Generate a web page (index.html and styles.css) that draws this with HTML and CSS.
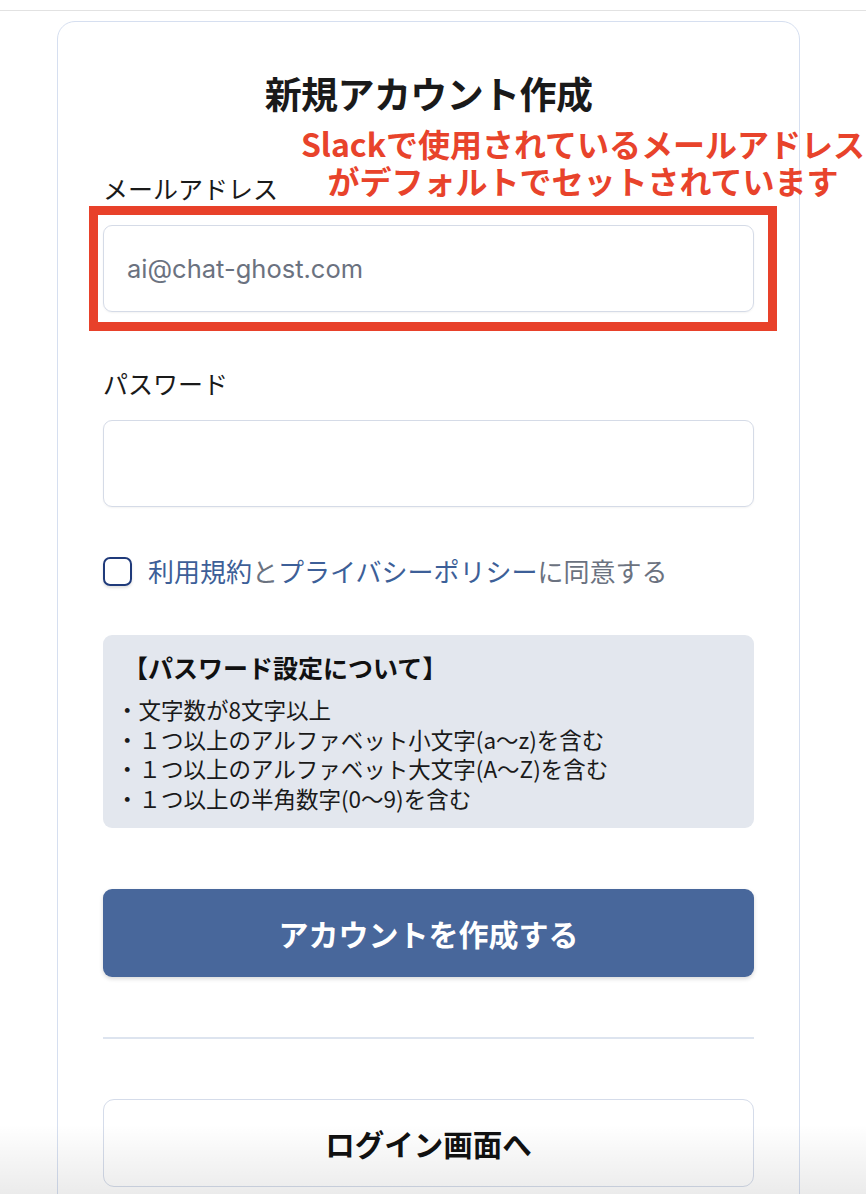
FILE: index.html
```html
<!DOCTYPE html>
<html lang="ja">
<head>
<meta charset="utf-8">
<title>新規アカウント作成</title>
<link rel="stylesheet" href="styles.css">
</head>
<body>
<div class="topbar"></div>
<div class="card">
  <h1 class="title">新規アカウント作成</h1>
  <label class="label">メールアドレス</label>
  <div class="input"><span class="placeholder">ai@chat-ghost.com</span></div>
  <label class="label label-pw">パスワード</label>
  <div class="input"></div>
  <div class="agree">
    <span class="checkbox"></span>
    <span class="agree-text"><span class="link">利用規約</span>と<span class="link">プライバシーポリシー</span>に同意する</span>
  </div>
  <div class="info">
    <div class="info-title">【パスワード設定について】</div>
    <ul class="info-list">
      <li>・文字数が8文字以上</li>
      <li>・１つ以上のアルファベット小文字(a〜z)を含む</li>
      <li>・１つ以上のアルファベット大文字(A〜Z)を含む</li>
      <li>・１つ以上の半角数字(0〜9)を含む</li>
    </ul>
  </div>
  <button class="btn-primary">アカウントを作成する</button>
  <hr class="divider">
  <button class="btn-secondary">ログイン画面へ</button>
</div>
<div class="annotation">
  <div class="annotation-line">Slackで使用されているメールアドレス</div>
  <div class="annotation-line">がデフォルトでセットされています</div>
</div>
<div class="highlight"></div>
<div class="fade"></div>
</body>
</html>
```

FILE: styles.css
```css
html, body {
  margin: 0;
  padding: 0;
  background: #ffffff;
  overflow: hidden;
  height: 1194px;
}
body {
  font-family: "Noto Sans CJK JP", "Noto Sans", sans-serif;
  color: #1a1a1a;
  position: relative;
}
.topbar {
  height: 10px;
  border-bottom: 1px solid #e2e2e2;
}
.card {
  margin: 10px 0 0 57px;
  width: 743px;
  box-sizing: border-box;
  border: 1.5px solid #d6dff0;
  border-radius: 18px;
  padding: 49px 45px 0 45px;
  height: 1300px;
  display: flex;
  flex-direction: column;
}
.title {
  margin: 0;
  text-align: center;
  font-size: 37px;
  line-height: 44px;
  font-weight: 700;
  letter-spacing: -0.6px;
}
.label {
  display: block;
  margin-top: 57px;
  font-size: 25px;
  line-height: 32px;
  font-weight: 400;
}
.label-pw {
  margin-top: 55px;
}
.input {
  margin-top: 21px;
  height: 87px;
  box-sizing: border-box;
  border: 1.5px solid #d5dbe7;
  border-radius: 9px;
  box-shadow: 0 1px 2px rgba(0, 0, 0, 0.05);
  display: flex;
  align-items: center;
  padding-left: 23px;
}
.placeholder {
  font-family: "Inter", "Liberation Sans", sans-serif;
  font-size: 25.5px;
  color: #6b7280;
}
.agree {
  margin-top: 48px;
  display: flex;
  align-items: center;
  gap: 16px;
}
.checkbox {
  width: 29px;
  height: 29px;
  box-sizing: border-box;
  border: 2px solid #1f3a7a;
  border-radius: 7px;
  box-shadow: 0 2px 3px rgba(0, 0, 0, 0.12);
  flex: none;
}
.agree-text {
  font-size: 26px;
  line-height: 32px;
  color: #6b7280;
}
.link {
  color: #3d5f98;
}
.info {
  margin-top: 48px;
  background: #e3e7ee;
  border-radius: 9px;
  padding: 15px 20px 15px 20px;
}
.info-title {
  font-size: 25px;
  line-height: 34px;
  font-weight: 700;
  color: #111;
}
.info-list {
  list-style: none;
  margin: 11px 0 0 -7px;
  padding: 0;
  font-size: 22.5px;
  line-height: 29.5px;
  color: #1a1a1a;
}
.btn-primary {
  margin-top: 61px;
  height: 88px;
  border: none;
  border-radius: 9px;
  background: #48679b;
  color: #ffffff;
  font-family: inherit;
  font-size: 30px;
  font-weight: 700;
  box-shadow: 0 2px 4px rgba(0, 0, 0, 0.15);
}
.divider {
  margin: 60px 0 0 0;
  border: none;
  border-top: 2px solid #dde4ef;
  height: 0;
}
.btn-secondary {
  margin-top: 60px;
  height: 88px;
  border: 1.5px solid #d5dcea;
  border-radius: 11px;
  background: #ffffff;
  color: #111;
  font-family: inherit;
  font-size: 29.5px;
  font-weight: 700;
}
.annotation {
  position: absolute;
  left: 283px;
  width: 600px;
  top: 126px;
  display: flex;
  flex-direction: column;
  gap: 3px;
  text-align: center;
  color: #e8432b;
  font-size: 32px;
  line-height: 34px;
  font-weight: 700;
  white-space: nowrap;
}
.highlight {
  position: absolute;
  left: 89px;
  top: 206px;
  width: 688px;
  height: 125px;
  box-sizing: border-box;
  border: 9px solid #e8412a;
}
.fade {
  position: absolute;
  left: 0;
  right: 0;
  bottom: 0;
  height: 70px;
  background: linear-gradient(to bottom, rgba(0, 0, 0, 0), rgba(0, 0, 0, 0.08));
  pointer-events: none;
}
```
